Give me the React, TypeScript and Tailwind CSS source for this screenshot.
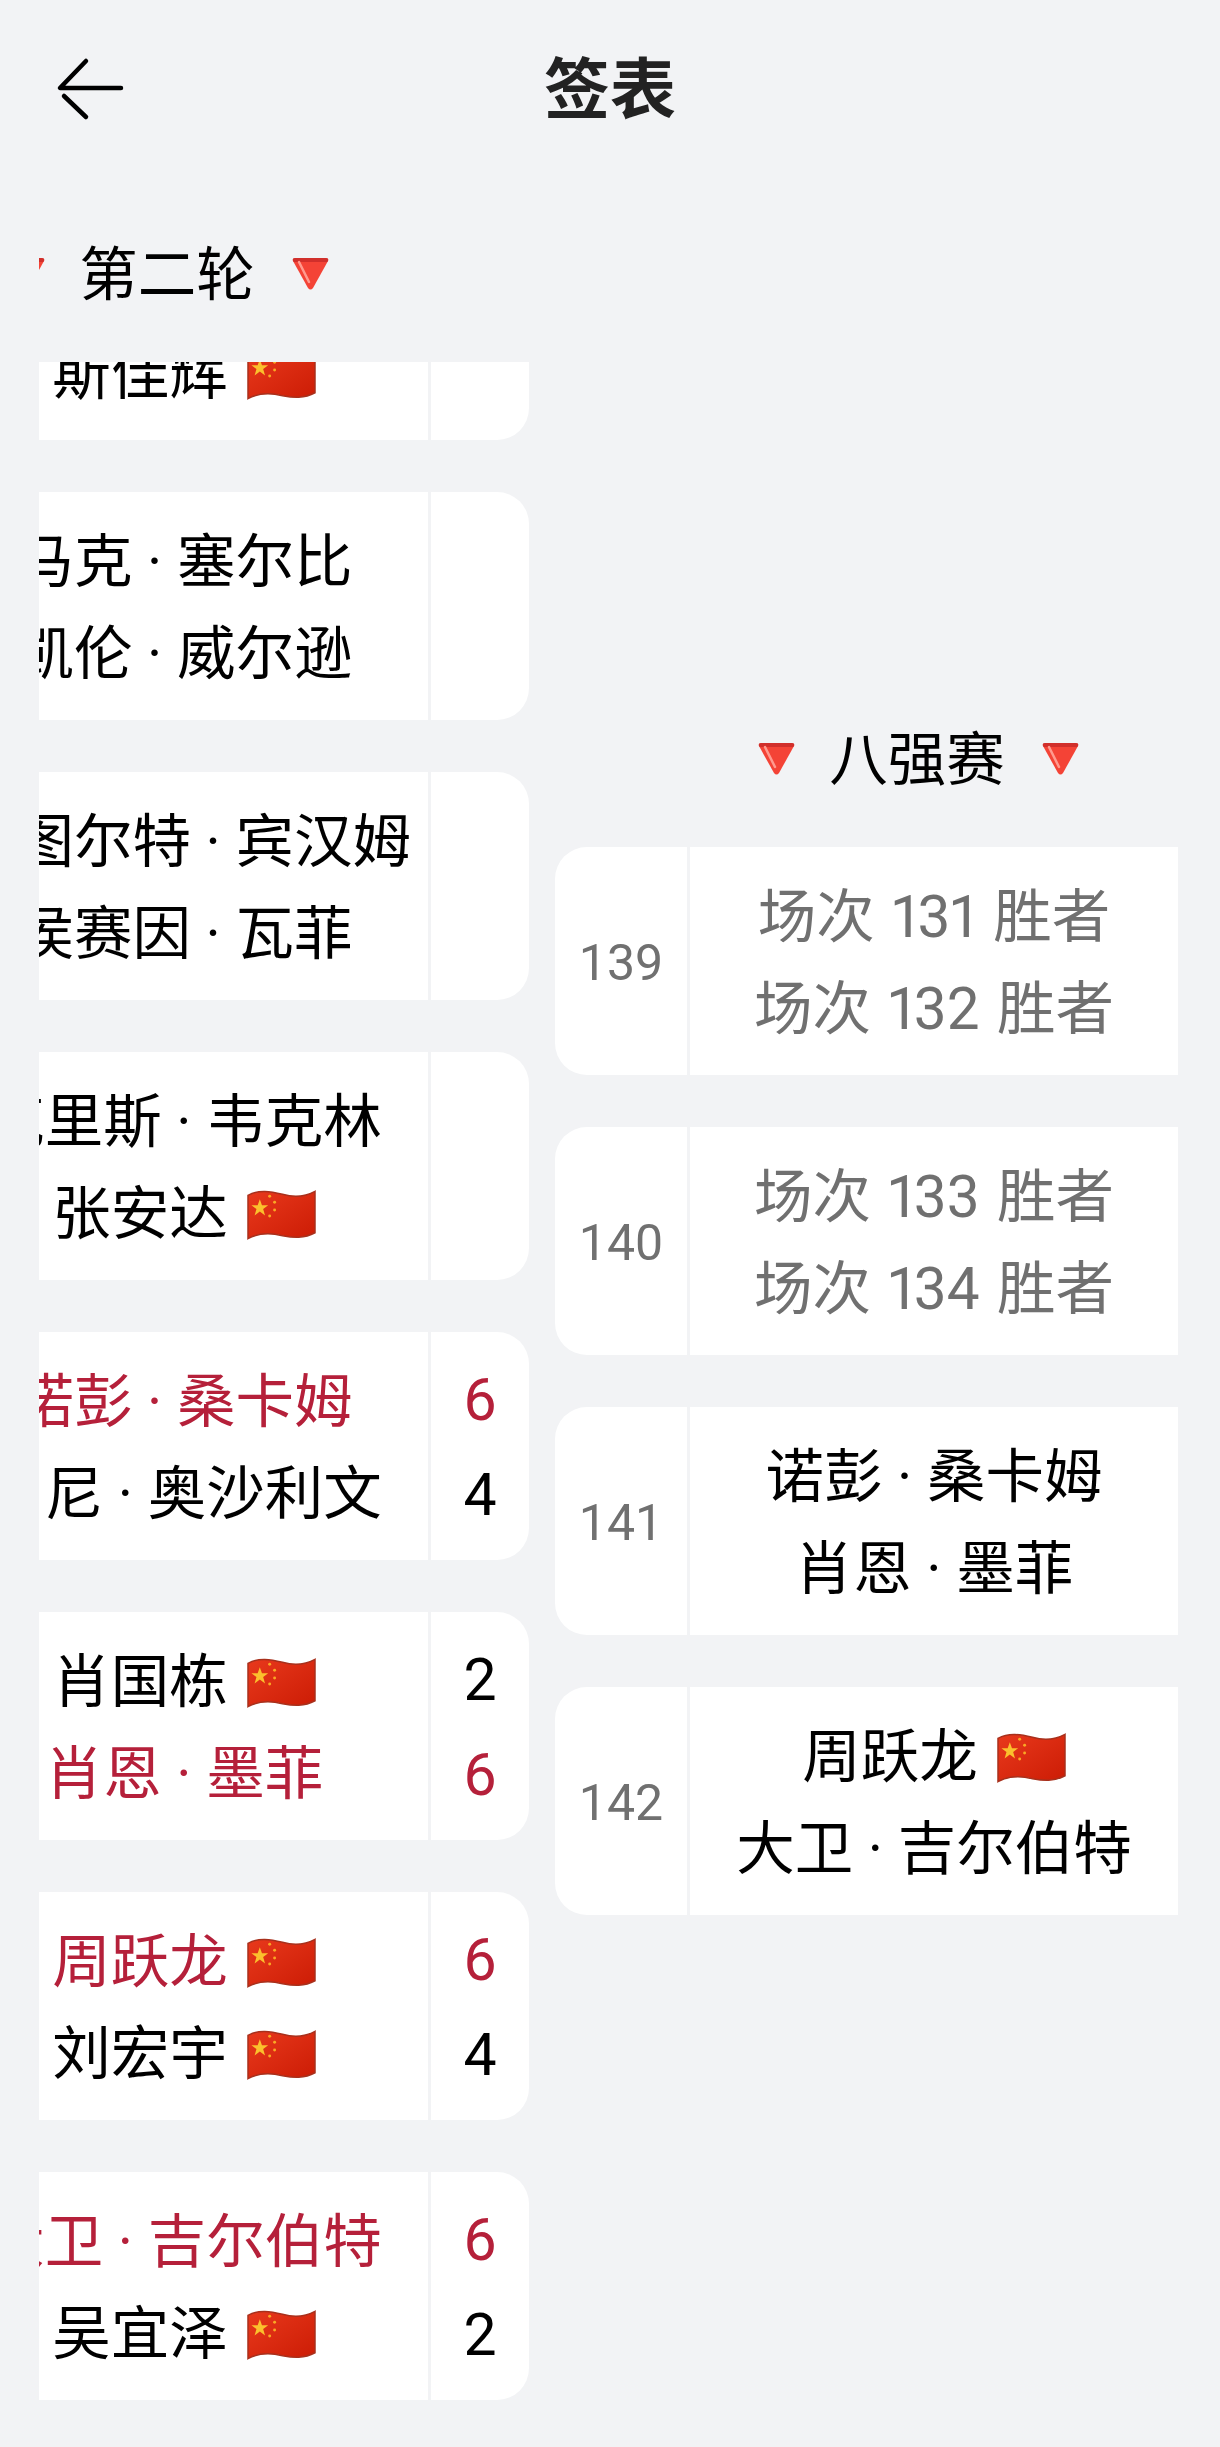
import React from "react";

type Row = { name: string; flag?: boolean; score?: string; win?: boolean };
type Match = { no: string; rows: Row[]; tbd?: boolean };

function Flag() {
  return (
    <svg viewBox="0 0 70 50" className="w-[69px] h-[50px] shrink-0 -ml-[1px]" aria-hidden="true">
      <defs>
        <linearGradient id="flagfill" x1="0" y1="0" x2="1" y2="1">
          <stop offset="0" stopColor="#e8391c" />
          <stop offset="1" stopColor="#cc1c05" />
        </linearGradient>
      </defs>
      <path d="M1 5 C12 -1 24 1 36 4 C47 7 58 7 69 1 L69 43 C58 49 47 48 36 46 C24 43 12 43 1 49 Z" fill="url(#flagfill)" stroke="#a8301c" strokeWidth="1.5" />
      <polygon points="12,9 14.2,15 20.5,15 15.4,19 17.3,25.5 12,21.5 6.7,25.5 8.6,19 3.5,15 9.8,15" fill="#fbc02d" transform="translate(1,0)" />
      <circle cx="23" cy="6" r="1.5" fill="#f9a825" />
      <circle cx="28" cy="12" r="1.5" fill="#f9a825" />
      <circle cx="28" cy="20" r="1.5" fill="#f9a825" />
      <circle cx="23" cy="26" r="1.5" fill="#f9a825" />
    </svg>
  );
}

function Tri({ shift }: { shift?: boolean }) {
  return (
    <svg viewBox="0 0 37 33" className={"w-[37px] h-[33px] shrink-0 " + (shift ? "translate-x-[3px]" : "")} aria-hidden="true">
      <path d="M3 1 H34 Q37 1 36 4 L21 31 Q18.5 34 16 31 L1 4 Q0 1 3 1 Z" fill="#f44336" />
      <path d="M3 1 H34 Q37 1 36 4 L35.4 5 H1.6 L1 4 Q0 1 3 1 Z" fill="#c62828" opacity="0.75" />
      <path d="M7 5 L17 25" stroke="#ff9a8f" strokeWidth="2.5" strokeLinecap="round" />
    </svg>
  );
}

function Card({ m }: { m: Match }) {
  return (
    <div className="flex h-[228px] w-[724px] shrink-0 rounded-[32px] bg-white overflow-hidden">
      <div className="w-[132px] shrink-0 pt-[4px] flex items-center justify-center text-[50px] text-[#707070]">{m.no}</div>
      <div className="w-[3px] shrink-0 bg-[#f2f3f5]" />
      <div className="w-[488px] shrink-0 pt-[5px] flex flex-col justify-center">
        {m.rows.map((r, i) => (
          <div
            key={i}
            className={
              "h-[92px] flex items-center justify-center gap-[20px] whitespace-nowrap text-[58.5px] proportional-nums " +
              (m.tbd ? "text-[#707070] [word-spacing:3px]" : r.win ? "text-[#b5203a]" : "text-black")
            }
          >
            <span>{r.name}</span>
            {r.flag && <Flag />}
          </div>
        ))}
      </div>
      <div className="w-[3px] shrink-0 bg-[#f2f3f5]" />
      <div className="w-[98px] shrink-0 pt-[3px] flex flex-col justify-center">
        {m.rows.map((r, i) => (
          <div
            key={i}
            className={"h-[95px] flex items-center justify-center text-[59px] " + (r.win ? "text-[#b5203a]" : "text-black")}
          >
            {r.score ?? "\u00a0"}
          </div>
        ))}
      </div>
    </div>
  );
}

function RoundHead({ title }: { title: string }) {
  return (
    <div className="h-[178px] flex items-center justify-center gap-[37px] text-[58.5px] text-black">
      <Tri shift />
      <span className="whitespace-nowrap pt-[5px]">{title}</span>
      <Tri />
    </div>
  );
}

const round2: Match[] = [
  { no: "", rows: [{ name: "\u00a0" }, { name: "斯佳辉", flag: true }] },
  { no: "", rows: [{ name: "马克 · 塞尔比" }, { name: "凯伦 · 威尔逊" }] },
  { no: "", rows: [{ name: "斯图尔特 · 宾汉姆" }, { name: "侯赛因 · 瓦菲" }] },
  { no: "", rows: [{ name: "克里斯 · 韦克林" }, { name: "张安达", flag: true }] },
  { no: "", rows: [{ name: "诺彭 · 桑卡姆", score: "6", win: true }, { name: "罗尼 · 奥沙利文", score: "4" }] },
  { no: "", rows: [{ name: "肖国栋", flag: true, score: "2" }, { name: "肖恩 · 墨菲", score: "6", win: true }] },
  { no: "", rows: [{ name: "周跃龙", flag: true, score: "6", win: true }, { name: "刘宏宇", flag: true, score: "4" }] },
  { no: "", rows: [{ name: "大卫 · 吉尔伯特", score: "6", win: true }, { name: "吴宜泽", flag: true, score: "2" }] },
];

const quarter: Match[] = [
  { no: "139", tbd: true, rows: [{ name: "场次 131 胜者" }, { name: "场次 132 胜者" }] },
  { no: "140", tbd: true, rows: [{ name: "场次 133 胜者" }, { name: "场次 134 胜者" }] },
  { no: "141", rows: [{ name: "诺彭 · 桑卡姆" }, { name: "肖恩 · 墨菲" }] },
  { no: "142", rows: [{ name: "周跃龙", flag: true }, { name: "大卫 · 吉尔伯特" }] },
];

export default function App() {
  return (
    <div className="h-[2447px] w-[1220px] overflow-hidden bg-[#f2f3f5] font-[family-name:Roboto,'Noto_Sans_CJK_SC',sans-serif]">
      <header className="relative h-[184px] flex justify-center pt-[51px]">
        <svg viewBox="0 0 70 64" className="absolute left-[55px] top-[57px] w-[70px] h-[64px]" fill="none" stroke="#000" strokeWidth="4.5" strokeLinecap="round" strokeLinejoin="round" aria-label="返回">
          <path d="M31 4 L5 31 H66" />
          <path d="M9 39 L31 60" />
        </svg>
        <h1 className="text-[66px] leading-[80px] font-bold text-[#222222]">签表</h1>
      </header>
      <div className="ml-[39px] w-[1139px] overflow-hidden">
        <div className="flex gap-[26px] -ml-[234px] w-[1500px]">
          <section className="w-[724px] shrink-0">
            <RoundHead title="第二轮" />
            <div className="h-[2085px] overflow-hidden">
              <div className="-mt-[150px] flex flex-col gap-[52px]">
                {round2.map((m, i) => (
                  <Card key={i} m={m} />
                ))}
              </div>
            </div>
          </section>
          <section className="w-[724px] shrink-0 pt-[485px]">
            <RoundHead title="八强赛" />
            <div className="flex flex-col gap-[52px]">
              {quarter.map((m) => (
                <Card key={m.no} m={m} />
              ))}
            </div>
          </section>
        </div>
      </div>
    </div>
  );
}
